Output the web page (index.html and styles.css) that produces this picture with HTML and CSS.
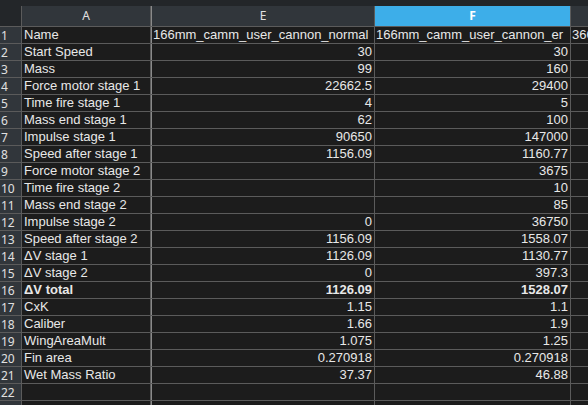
FILE: index.html
```html
<!DOCTYPE html>
<html>
<head>
<meta charset="utf-8">
<link rel="stylesheet" href="styles.css">
</head>
<body>
<div class="topband"></div>
<div class="sheet">
  <div class="corner"></div>
  <div class="colhead">A</div>
  <div class="colhead e">E</div>
  <div class="colhead sel">F</div>
  <div class="colhead"></div>

  <div class="rh">1</div><div class="c a">Name</div><div class="c e t">166mm_camm_user_cannon_normal</div><div class="c t">166mm_camm_user_cannon_er</div><div class="c t">366mm_camm</div>
  <div class="rh">2</div><div class="c a">Start Speed</div><div class="c e n">30</div><div class="c n">30</div><div class="c"></div>
  <div class="rh">3</div><div class="c a">Mass</div><div class="c e n">99</div><div class="c n">160</div><div class="c"></div>
  <div class="rh">4</div><div class="c a">Force motor stage 1</div><div class="c e n">22662.5</div><div class="c n">29400</div><div class="c"></div>
  <div class="rh">5</div><div class="c a">Time fire stage 1</div><div class="c e n">4</div><div class="c n">5</div><div class="c"></div>
  <div class="rh">6</div><div class="c a">Mass end stage 1</div><div class="c e n">62</div><div class="c n">100</div><div class="c"></div>
  <div class="rh">7</div><div class="c a">Impulse stage 1</div><div class="c e n">90650</div><div class="c n">147000</div><div class="c"></div>
  <div class="rh">8</div><div class="c a">Speed after stage 1</div><div class="c e n">1156.09</div><div class="c n">1160.77</div><div class="c"></div>
  <div class="rh">9</div><div class="c a">Force motor stage 2</div><div class="c e n"></div><div class="c n">3675</div><div class="c"></div>
  <div class="rh">10</div><div class="c a">Time fire stage 2</div><div class="c e n"></div><div class="c n">10</div><div class="c"></div>
  <div class="rh">11</div><div class="c a">Mass end stage 2</div><div class="c e n"></div><div class="c n">85</div><div class="c"></div>
  <div class="rh">12</div><div class="c a">Impulse stage 2</div><div class="c e n">0</div><div class="c n">36750</div><div class="c"></div>
  <div class="rh">13</div><div class="c a">Speed after stage 2</div><div class="c e n">1156.09</div><div class="c n">1558.07</div><div class="c"></div>
  <div class="rh">14</div><div class="c a">ΔV stage 1</div><div class="c e n">1126.09</div><div class="c n">1130.77</div><div class="c"></div>
  <div class="rh">15</div><div class="c a">ΔV stage 2</div><div class="c e n">0</div><div class="c n">397.3</div><div class="c"></div>
  <div class="rh">16</div><div class="c a b">ΔV total</div><div class="c e n b">1126.09</div><div class="c n b">1528.07</div><div class="c"></div>
  <div class="rh">17</div><div class="c a">CxK</div><div class="c e n">1.15</div><div class="c n">1.1</div><div class="c"></div>
  <div class="rh">18</div><div class="c a">Caliber</div><div class="c e n">1.66</div><div class="c n">1.9</div><div class="c"></div>
  <div class="rh">19</div><div class="c a">WingAreaMult</div><div class="c e n">1.075</div><div class="c n">1.25</div><div class="c"></div>
  <div class="rh">20</div><div class="c a">Fin area</div><div class="c e n">0.270918</div><div class="c n">0.270918</div><div class="c"></div>
  <div class="rh">21</div><div class="c a">Wet Mass Ratio</div><div class="c e n">37.37</div><div class="c n">46.88</div><div class="c"></div>
  <div class="rh">22</div><div class="c a"></div><div class="c e"></div><div class="c"></div><div class="c"></div>
  <div class="rh"></div><div class="c a"></div><div class="c e"></div><div class="c"></div><div class="c"></div>
</div>
</body>
</html>
```

FILE: styles.css
```css
html, body {
  margin: 0;
  padding: 0;
  background: #232629;
  overflow: hidden;
  width: 588px;
  height: 405px;
}
.topband {
  height: 6px;
  background: #232629;
}
.sheet {
  display: grid;
  grid-template-columns: 21px 128px 223px 195px 40px;
  grid-template-rows: 20px repeat(23, 16px);
  column-gap: 1px;
  row-gap: 1px;
  background: #5b5b5b;
  width: 612px;
  font-family: "Liberation Sans", Arial, sans-serif;
  font-size: 13px;
  color: #e8e8e8;
}
.corner {
  background: #232629;
}
.colhead {
  background: #31363b;
  font-family: "Noto Sans", sans-serif;
  font-size: 12px;
  color: #e0e0e0;
  display: flex;
  align-items: center;
  justify-content: center;
  line-height: 20px;
}
.colhead.e {
  border-left: 1px solid #8a8a8a;
}
.colhead.sel {
  background: #3daee9;
  color: #ffffff;
  font-weight: bold;
}
.rh {
  background: #31363b;
  font-family: "Noto Sans", sans-serif;
  font-size: 12px;
  color: #e0e0e0;
  line-height: 15px;
  padding-top: 1px;
  padding-left: 1px;
}
.c {
  background: #1c1c1c;
  line-height: 16px;
  white-space: nowrap;
  overflow: hidden;
  padding: 0 2px;
}
.c.e {
  border-left: 1px solid #8a8a8a;
}
.c.n {
  text-align: right;
}
.c.t {
  padding-left: 1px;
}
.b {
  font-weight: bold;
}
```
